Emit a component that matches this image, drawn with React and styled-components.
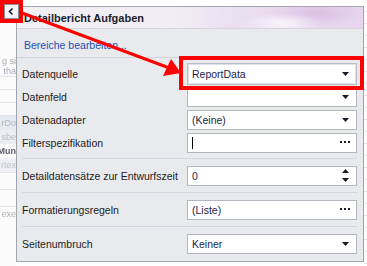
import React from 'react';
import styled, { createGlobalStyle } from 'styled-components';

const Global = createGlobalStyle`
  html, body { margin: 0; padding: 0; background: #ffffff; }
  body { font-family: "Liberation Sans", Arial, sans-serif; }
`;

const Screen = styled.div`
  position: relative;
  width: 367px;
  height: 266px;
  display: flex;
  overflow: hidden;
  background: #ffffff;
`;

// designer surface peeking out on the left
const Backdrop = styled.div`
  width: 16px;
  flex: none;
  display: flex;
  flex-direction: column;
  padding-top: 56px;
  background: #fbfbfc;
`;

const Ghost = styled.div`
  height: ${p => p.$h || 10}px;
  display: flex;
  justify-content: flex-end;
  align-items: center;
  overflow: hidden;
  white-space: nowrap;
  font-size: 9px;
  line-height: 9px;
  font-weight: ${p => (p.$bold ? 700 : 400)};
  color: ${p => p.$color || '#b5b5bb'};
  background: ${p => p.$bg || 'transparent'};
  border-bottom: ${p => (p.$line ? '1px solid #e3e4e8' : 'none')};
  filter: blur(0.4px);
`;

const RightStrip = styled.div`
  flex: 1;
  background: repeating-linear-gradient(180deg, #ffffff 0 11px, #e2e4ea 11px 12px);
`;

const Panel = styled.div`
  width: 348px;
  flex: none;
  box-sizing: border-box;
  margin-top: 6px;
  height: 256px;
  border: 1px solid #a3a5ad;
  background: #e9eaee;
  display: flex;
  flex-direction: column;
`;

const Header = styled.div`
  height: 21px;
  display: flex;
  align-items: center;
  padding-left: 7px;
  background:
    radial-gradient(ellipse 60px 14px at 265px 16px, rgba(255,255,255,0.75), rgba(255,255,255,0) 70%),
    radial-gradient(ellipse 70px 20px at 300px 6px, rgba(214,180,224,0.7), rgba(214,180,224,0) 70%),
    radial-gradient(ellipse 40px 16px at 215px 20px, rgba(236,222,242,0.9), rgba(236,222,242,0) 70%),
    linear-gradient(90deg, #f1f0f5 0%, #f0edf3 45%, #e9dcef 70%, #e7d6ee 100%);
  border-bottom: 1px solid #d9d6de;
`;

const Title = styled.div`
  font-size: 11px;
  font-weight: 700;
  color: #1b1b2a;
`;

const LinkSection = styled.div`
  height: 28px;
  display: flex;
  align-items: center;
  padding-left: 7px;
  border-bottom: 1px solid #d2d4da;
  margin-right: 6px;
`;

const ActionLink = styled.a`
  font-size: 10.5px;
  color: #1f4db5;
  text-decoration: none;
  padding-top: 3px;
`;

const Section = styled.div`
  padding: ${p => p.$pad || '5px 0'};
  margin: 0 6px 0 5px;
  border-bottom: ${p => (p.$last ? 'none' : '1px solid #d4d6dc')};
  display: flex;
  flex-direction: column;
`;

const Row = styled.div`
  height: 23px;
  display: grid;
  grid-template-columns: 165px 170px;
  align-items: center;
`;

const Label = styled.div`
  min-width: 0;
  overflow: hidden;
  font-size: 10.5px;
  color: #1c1c24;
  white-space: nowrap;
`;

const Field = styled.div`
  height: ${p => (p.$focused ? 22 : 20)}px;
  box-sizing: border-box;
  border: 1px solid ${p => (p.$focused ? '#b9bcc4' : '#b4b7bf')};
  box-shadow: ${p => (p.$focused ? 'inset 0 0 0 1px #dfe1e6' : 'none')};
  background: #ffffff;
  display: flex;
  align-items: center;
  padding: 0 4px 0 4px;
`;

const Value = styled.div`
  flex: 1;
  font-size: 10.5px;
  color: #1e1e48;
  white-space: nowrap;
`;

const Caret = styled.span`
  display: inline-block;
  width: 1px;
  height: 12px;
  background: #000;
  vertical-align: middle;
`;

const Glyph = styled.div`
  width: 14px;
  flex: none;
  display: flex;
  justify-content: center;
  align-items: center;
`;

const DropArrow = () => (
  <Glyph>
    <svg width="7" height="4" viewBox="0 0 7 4"><path d="M0 0h7L3.5 4z" fill="#1a1a2a" /></svg>
  </Glyph>
);

const Dots = () => (
  <Glyph>
    <svg width="11" height="3" viewBox="0 0 11 3">
      <rect x="0" y="0" width="2" height="2" fill="#1a1a2a" />
      <rect x="4" y="0" width="2" height="2" fill="#1a1a2a" />
      <rect x="8" y="0" width="2" height="2" fill="#1a1a2a" />
    </svg>
  </Glyph>
);

const Spin = () => (
  <Glyph>
    <svg width="7" height="13" viewBox="0 0 7 13">
      <path d="M3.5 0L7 4H0z" fill="#1a1a2a" />
      <path d="M0 9h7L3.5 13z" fill="#1a1a2a" />
    </svg>
  </Glyph>
);

const Overlay = styled.svg`
  position: absolute;
  left: 0;
  top: 0;
  pointer-events: none;
`;

const Annotations = () => (
  <Overlay width="367" height="266" viewBox="0 0 367 266">
    {/* smart tag button */}
    <rect x="4.5" y="4.5" width="14" height="14" fill="#f3f3f5" stroke="#8c8f97" />
    <path d="M12.5 8.5L9.5 11.5L12.5 14.5" fill="none" stroke="#1a1a2a" strokeWidth="1.6" />
    <rect x="2" y="2" width="19" height="19" fill="none" stroke="#ff0000" strokeWidth="4" />
    {/* red arrow */}
    <line x1="22" y1="13" x2="168" y2="67.5" stroke="#ff0000" strokeWidth="3" />
    <path d="M181 73L163 76L171 59z" fill="#ff0000" />
    <rect x="181" y="58" width="181" height="30" fill="none" stroke="#ff0000" strokeWidth="4" />
  </Overlay>
);

export default function App() {
  return (
    <>
      <Global />
      <Screen>
        <Backdrop>
          <Ghost $h={10} $color="#a9a9b0">g si</Ghost>
          <Ghost $h={10} $color="#b1a6c6" $line>tha</Ghost>
          <Ghost $h={12} $line />
          <Ghost $h={12} $line />
          <Ghost $h={12} $line />
          <Ghost $h={14} $bg="#e6e9ef" $color="#b3b6bf">rDo</Ghost>
          <Ghost $h={14} $bg="#eceef2" $color="#b8bac2">sbe</Ghost>
          <Ghost $h={14} $bold $color="#5a5d68">Mun</Ghost>
          <Ghost $h={14} $bg="#eef0f3" $color="#c1c3ca" $line>rtex</Ghost>
          <Ghost $h={16} $line />
          <Ghost $h={16} $line />
          <Ghost $h={14} $color="#b0b0b6">exe</Ghost>
        </Backdrop>
        <Panel>
          <Header>
            <Title>Detailbericht Aufgaben</Title>
          </Header>
          <LinkSection>
            <ActionLink href="#">Bereiche bearbeiten...</ActionLink>
          </LinkSection>
          <Section $pad="4px 0">
            <Row>
              <Label>Datenquelle</Label>
              <Field $focused>
                <Value>ReportData</Value>
                <DropArrow />
              </Field>
            </Row>
            <Row>
              <Label>Datenfeld</Label>
              <Field>
                <Value />
                <DropArrow />
              </Field>
            </Row>
            <Row>
              <Label>Datenadapter</Label>
              <Field>
                <Value>(Keine)</Value>
                <DropArrow />
              </Field>
            </Row>
            <Row>
              <Label>Filterspezifikation</Label>
              <Field>
                <Value><Caret /></Value>
                <Dots />
              </Field>
            </Row>
          </Section>
          <Section>
            <Row>
              <Label>Detaildatensätze zur Entwurfszeit</Label>
              <Field>
                <Value>0</Value>
                <Spin />
              </Field>
            </Row>
          </Section>
          <Section>
            <Row>
              <Label>Formatierungsregeln</Label>
              <Field>
                <Value>(Liste)</Value>
                <Dots />
              </Field>
            </Row>
          </Section>
          <Section $last>
            <Row>
              <Label>Seitenumbruch</Label>
              <Field>
                <Value>Keiner</Value>
                <DropArrow />
              </Field>
            </Row>
          </Section>
        </Panel>
        <RightStrip />
        <Annotations />
      </Screen>
    </>
  );
}
